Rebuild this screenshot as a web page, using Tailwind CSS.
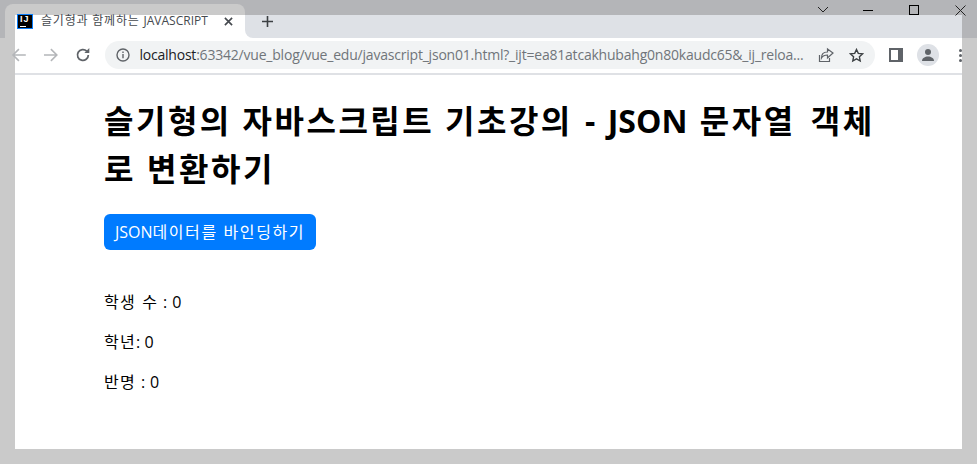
<!DOCTYPE html>
<html lang="ko">
<head>
<meta charset="utf-8">
<title>슬기형과 함께하는 JAVASCRIPT</title>
<script src="https://cdn.jsdelivr.net/npm/@tailwindcss/browser@4"></script>
</head>
<body class="m-0 h-[464px] w-[977px] overflow-hidden bg-[#cacaca] font-['Open_Sans','Noto_Sans_CJK_KR',sans-serif]">

<!-- title bar strip -->
<div class="flex h-[15px] bg-[#b4b5b8]">
  <div class="ml-[5px] mt-[4px] h-[11px] w-[240px] rounded-t-lg bg-[#cacaca]"></div>
  <div class="relative flex-1">
    <svg class="absolute left-[572px] top-[6px]" width="12" height="7" viewBox="0 0 12 7" fill="none" stroke="#222" stroke-width="1"><path d="M1 1l5 5 5-5"/></svg>
    <div class="absolute left-[618px] top-[10px] h-px w-[10px] bg-black"></div>
    <div class="absolute left-[664px] top-[5px] h-[10px] w-[10px] border border-black"></div>
    <svg class="absolute left-[710px] top-[5px]" width="11" height="11" viewBox="0 0 11 11" fill="none" stroke="#222" stroke-width="1"><path d="M.5.5l10 10M10.500.5l-10 10"/></svg>
  </div>
</div>

<div class="flex h-[434px]">
  <!-- left gutter -->
  <div class="w-[15px] shrink-0">
    <div class="flex h-[23px] bg-[#cacaca]"><div class="w-[5px] bg-[#b4b5b8]"></div></div>
  </div>

  <!-- browser window -->
  <div class="flex w-[947px] shrink-0 flex-col bg-white">
    <!-- tabs -->
    <div class="flex h-[23px] bg-white">
      <div class="flex h-[23px] w-[230px] items-start bg-white pl-[2px]">
        <div class="-mt-px flex h-[15px] w-[16px] flex-col justify-between border border-[#087cfa] bg-black px-[2px] font-['Liberation_Sans']">
          <span class="tracking-[1px] text-[9px] font-bold leading-[9px] text-white">IJ</span>
          <span class="mb-[1px] block h-px w-[6px] bg-white"></span>
        </div>
        <span class="ml-[8px] whitespace-nowrap text-[12px] leading-[11px] tracking-[0.8px] text-[#45494e]">슬기형과 함께하는 <span class="tracking-normal">JAVASCRIPT</span></span>
        <svg class="ml-auto mr-[12px] mt-[2px]" width="9" height="9" viewBox="0 0 10 10" fill="none" stroke="#45494e" stroke-width="1.8"><path d="M1 1l8 8M9 1l-8 8"/></svg>
      </div>
      <div class="flex h-[23px] flex-1 rounded-bl-lg bg-[#dee1e6] pl-[17px] pt-[1px]">
        <svg width="11" height="11" viewBox="0 0 11 11" fill="none" stroke="#3c4043" stroke-width="1.6"><path d="M5.500 0v11M0 5.500h11"/></svg>
      </div>
    </div>

    <!-- toolbar -->
    <div class="flex h-[37px] items-center border-b-2 border-[#dfe1e5] bg-white pb-[1px]">
      <svg class="ml-[-4px]" width="16" height="16" viewBox="0 0 16 16" fill="none" stroke="#b4b6b9" stroke-width="1.6"><path d="M15 8H2M8 2L2 8l6 6"/></svg>
      <svg class="ml-[16px]" width="16" height="16" viewBox="0 0 16 16" fill="none" stroke="#b4b6b9" stroke-width="1.6"><path d="M1 8h13M8 2l6 6-6 6"/></svg>
      <svg class="ml-[16px]" width="16" height="16" viewBox="0 0 16 16" fill="none" stroke="#5f6368" stroke-width="1.8"><path d="M13.500 8a5.500 5.500 0 1 1-1.600-3.900"/><path d="M14.500 1v5h-5z" fill="#5f6368" stroke="none"/></svg>
      <!-- address bar -->
      <div class="ml-[15px] flex h-[28px] w-[770px] shrink-0 items-center rounded-full bg-[#f1f3f4] pl-[11px]">
        <svg width="14" height="14" viewBox="0 0 14 14" fill="none" stroke="#5f6368" stroke-width="1.4"><circle cx="7" cy="7" r="6"/><path d="M7 6v4.200M7 3.600v1.400"/></svg>
        <span class="ml-[9px] w-[671px] shrink-0 whitespace-nowrap text-[14px] leading-none tracking-[-0.21px] text-[#70757a]"><span class="text-[#202124]">localhost</span>:63342/vue_blog/vue_edu/javascript_json01.html?_ijt=ea81atcakhubahg0n80kaudc65&amp;_ij_reloa...</span>
        <svg class="ml-[8px]" width="16" height="16" viewBox="0 0 16 16" fill="none" stroke="#5f6368" stroke-width="1.200"><path d="M1.500 8v6.500h10V11"/><path d="M9.500 2v3C5 5 3.500 7.500 3.500 11c1.500-2.500 3-3 6-3v3L15 6z"/></svg>
        <svg class="ml-[15px]" width="15" height="15" viewBox="0 0 15 15" fill="none" stroke="#3c4043" stroke-width="1.400"><path d="M7.500 1.500l1.800 3.900 4.200.5-3.100 2.900.8 4.200-3.700-2.100-3.700 2.100.8-4.200L1.500 5.900l4.200-.5z"/></svg>
      </div>
      <div class="ml-[14px] flex h-[14px] w-[14px] border-[2px] border-[#5f6368] bg-[#5f6368]"><div class="h-full w-[7px] bg-white"></div></div>
      <div class="ml-[14px] flex h-[22px] w-[22px] items-center justify-center rounded-full bg-[#dee1e6]">
        <svg width="14" height="14" viewBox="0 0 14 14" fill="#5f6368"><circle cx="7" cy="4" r="3"/><path d="M1 13c0-3 3-4.500 6-4.500S13 10 13 13z"/></svg>
      </div>
      <div class="ml-[20px] flex flex-col gap-[2px]">
        <span class="h-[3px] w-[3px] rounded-full bg-[#5f6368]"></span>
        <span class="h-[3px] w-[3px] rounded-full bg-[#5f6368]"></span>
        <span class="h-[3px] w-[3px] rounded-full bg-[#5f6368]"></span>
      </div>
    </div>

    <!-- page -->
    <div class="pl-[89px] pt-[22px]">
      <h1 class="whitespace-nowrap text-[32px] font-bold leading-[48px] text-black"><span class="tracking-[2.5px]">슬기형의 자바스크립트 기초강의</span><span class="[word-spacing:4px]"> - JSON </span><span class="tracking-[2.6px] [word-spacing:4px]">문자열 객체</span><br><span class="tracking-[2.6px]">로 변환하기</span></h1>
      <button class="mt-[21px] block h-[36px] w-[212px] rounded-[6px] bg-[#007bff] text-[16px] leading-none text-white">JSON<span class="tracking-[1.6px]">데이터를 바인딩하기</span></button>
      <p class="mt-[40px] text-[16px] leading-[24px] text-black [word-spacing:0.7px]"><span class="tracking-[1.3px]">학생 수</span> : 0</p>
      <p class="mt-[16px] text-[16px] leading-[24px] text-black"><span class="tracking-[1.3px]">학년</span>: 0</p>
      <p class="mt-[16px] text-[16px] leading-[24px] text-black [word-spacing:0.7px]"><span class="tracking-[1.3px]">반명</span> : 0</p>
    </div>
  </div>

  <!-- right gutter -->
  <div class="w-[15px] shrink-0"><div class="h-[23px] bg-[#b4b5b8]"></div></div>
</div>
</body>
</html>
